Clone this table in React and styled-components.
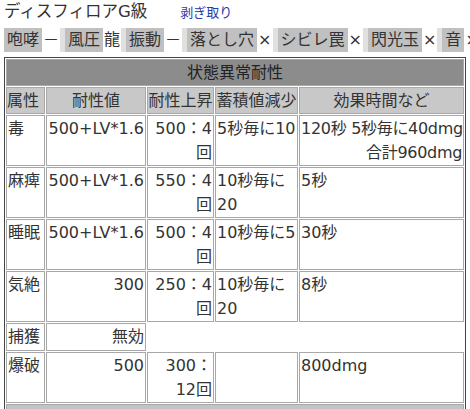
import React from 'react';
import styled, { createGlobalStyle } from 'styled-components';

const Global = createGlobalStyle`
  html, body { margin: 0; padding: 0; background: #fff; overflow: hidden; }
  body {
    font-family: "DejaVu Sans", "Noto Sans CJK JP", sans-serif;
    color: #333;
    font-size: 16px;
  }
`;

const Page = styled.div`
  width: 470px;
  box-sizing: border-box;
  padding-left: 4px;
  overflow: hidden;
`;

const Heading = styled.div`
  display: flex;
  align-items: baseline;
  height: 26px;
  line-height: 24px;
`;

const Title = styled.h2`
  margin: 0;
  font-size: 16.5px;
  font-weight: normal;
  color: #333;
`;

const Link = styled.a`
  margin-left: 33px;
  font-size: 13px;
  color: #2a3aa8;
  text-decoration: none;
`;

const Toolbar = styled.div`
  display: flex;
  gap: 5px;
  height: 24px;
  line-height: 24px;
  margin-top: 2px;
  white-space: nowrap;
  background: #e0e0e0;
`;

const Pair = styled.div`
  display: flex;
  flex-shrink: 0;
  background: #c0c0c0;
`;

const Label = styled.span`
  padding: 0 3px;
`;

const Value = styled.span`
  background: #fff;
  padding: 0 1px;
`;

const Table = styled.table`
  border-collapse: separate;
  border-spacing: 1px;
  border: 1px solid #444;
  table-layout: fixed;
  width: 462px;
  margin-top: 5px;
`;

const Caption = styled.th`
  border: 1px solid #a8a8a8;
  background: ${p => p.$light ? '#c4c4c4' : '#8c8c8c'};
  font-weight: normal;
  color: #222;
  line-height: 24px;
  padding: 1px 0 0;
  text-align: center;
`;

const Head = styled.th`
  border: 1px solid #a8a8a8;
  background: #c8c8c8;
  font-weight: normal;
  color: #333;
  line-height: 24px;
  padding: 1px 0 0;
  white-space: nowrap;
  text-align: ${p => p.$align || 'center'};
`;

const Cell = styled.td`
  border: 1px solid #a8a8a8;
  line-height: 24px;
  padding: 1px 1px ${p => p.$tall ? '0' : '1px'};
  vertical-align: top;
  text-align: ${p => p.$align || 'left'};
  white-space: ${p => p.$nowrap ? 'nowrap' : 'normal'};
  letter-spacing: ${p => p.$nowrap ? '-0.3px' : 'normal'};
  height: ${p => p.$tall ? '49px' : 'auto'};
  box-sizing: border-box;
`;

const toolbar = [
  ['咆哮', '－'],
  ['風圧', '龍'],
  ['振動', '－'],
  ['落とし穴', '×'],
  ['シビレ罠', '×'],
  ['閃光玉', '×'],
  ['音', '×'],
];

const rows = [
  { name: '毒', val: '500+LV*1.6', up: '500：4回', acc: '5秒毎に10', eff: ['120秒 5秒毎に40dmg', '合計960dmg'], effAlign: 'right' },
  { name: '麻痺', val: '500+LV*1.6', up: '550：4回', acc: '10秒毎に20', eff: ['5秒'] },
  { name: '睡眠', val: '500+LV*1.6', up: '500：4回', acc: '10秒毎に5', eff: ['30秒'] },
  { name: '気絶', val: '300', up: '250：4回', acc: '10秒毎に20', eff: ['8秒'] },
  { name: '捕獲', val: '無効', only: true },
  { name: '爆破', val: '500', up: '300：12回', acc: '', eff: ['800dmg'] },
];

export default function App() {
  return (
    <>
      <Global />
      <Page>
        <Heading>
          <Title>ディスフィロアG級</Title>
          <Link href="#">剥ぎ取り</Link>
        </Heading>
        <Toolbar>
          {toolbar.map(([l, v]) => (
            <Pair key={l}>
              <Label>{l}</Label>
              <Value>{v}</Value>
            </Pair>
          ))}
        </Toolbar>
        <Table>
          <colgroup>
            <col style={{ width: 39 }} />
            <col style={{ width: 100 }} />
            <col style={{ width: 67 }} />
            <col style={{ width: 83 }} />
            <col style={{ width: 165 }} />
          </colgroup>
          <tbody>
            <tr><Caption colSpan={5}>状態異常耐性</Caption></tr>
            <tr>
              <Head $align="left">属性</Head>
              <Head>耐性値</Head>
              <Head>耐性上昇</Head>
              <Head>蓄積値減少</Head>
              <Head>効果時間など</Head>
            </tr>
            {rows.map(r => (
              <tr key={r.name}>
                <Cell $tall={!r.only}>{r.name}</Cell>
                <Cell $tall={!r.only} $align="right">{r.val}</Cell>
                {!r.only && (
                  <>
                    <Cell $tall $align="right">{r.up}</Cell>
                    <Cell $tall>{r.acc}</Cell>
                    <Cell $tall $align={r.effAlign} $nowrap={r.eff.length > 1}>
                      {r.eff.map((t, i) => (
                        <React.Fragment key={i}>{i > 0 && <br />}{t}</React.Fragment>
                      ))}
                    </Cell>
                  </>
                )}
              </tr>
            ))}
            <tr><Caption colSpan={5} $light>部位破壊・怯み値</Caption></tr>
          </tbody>
        </Table>
      </Page>
    </>
  );
}
